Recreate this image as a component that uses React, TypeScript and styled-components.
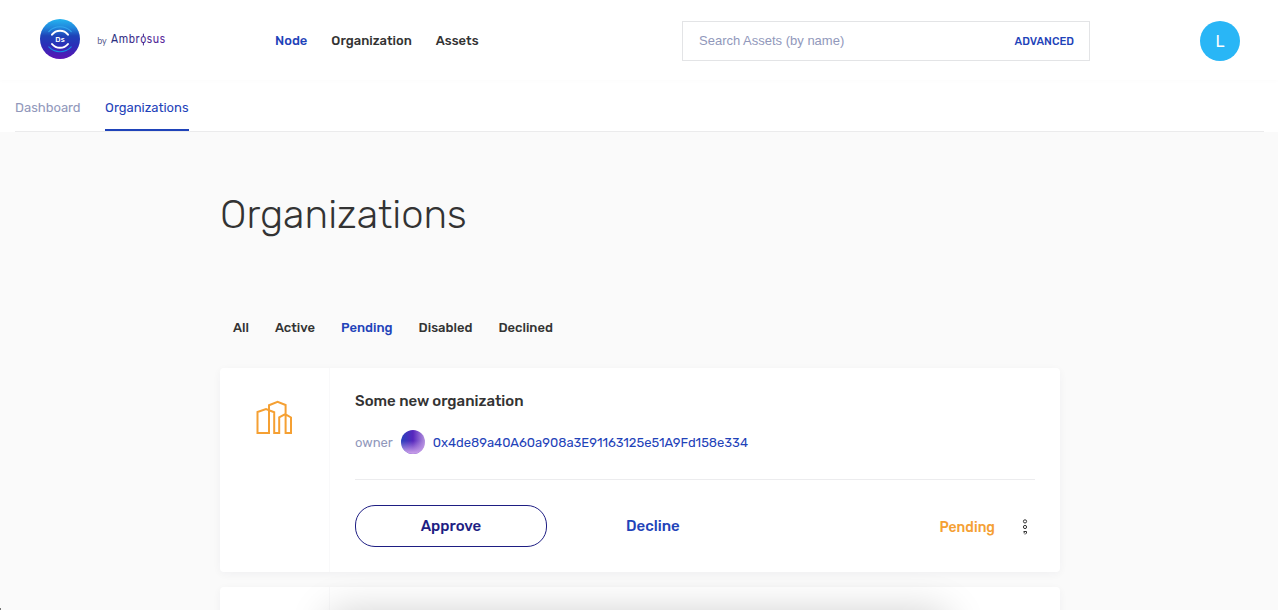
import React from 'react';
import styled, { createGlobalStyle } from 'styled-components';

const GlobalStyle = createGlobalStyle`
  * { box-sizing: border-box; }
  body {
    margin: 0;
    background: #fafafa;
    color: #333333;
    font-family: Rubik, Roboto, sans-serif;
    font-size: 13px;
  }
  button { font-family: inherit; cursor: pointer; }
`;

const Page = styled.div`
  position: relative;
  height: 610px;
  overflow: hidden;
`;

const Header = styled.header`
  position: relative;
  display: flex;
  align-items: center;
  height: 80px;
  padding: 2px 38px 0 40px;
  background: #fff;
  box-shadow: 0 0 6px rgba(0, 0, 0, 0.022);
`;

const Brand = styled.a`
  display: flex;
  align-items: center;
  width: 235px;
  height: 40px;
  margin-top: -4px;
`;

const Nav = styled.nav`
  display: flex;
  gap: 24px;
  width: 407px;
`;

const NavLink = styled.a<{ $active?: boolean }>`
  color: ${({ $active }) => ($active ? '#1f43b9' : '#333333')};
  font-weight: 500;
  line-height: 16px;
  white-space: nowrap;
`;

const Search = styled.div`
  display: flex;
  align-items: center;
  justify-content: space-between;
  width: 408px;
  height: 40px;
  padding: 0 15px 0 16px;
  border: 1px solid #e3e4e6;
`;

const SearchInput = styled.input`
  width: 240px;
  padding: 0 0 2px;
  border: 0;
  outline: 0;
  background: none;
  color: #333;
  font: 13px 'Liberation Sans', sans-serif;
  &::placeholder { color: #9198bb; opacity: 1; }
`;

const Advanced = styled.button`
  padding: 0;
  border: 0;
  background: none;
  color: #1f43b9;
  font-size: 11px;
  font-weight: 500;
`;

const Avatar = styled.div`
  display: flex;
  align-items: center;
  justify-content: center;
  width: 40px;
  height: 40px;
  margin-left: auto;
  border-radius: 50%;
  background: #29b6f6;
  color: #fff;
  font-size: 16px;
  font-weight: 400;
`;

const TabBar = styled.div`
  height: 52px;
  padding: 0 14px 0 15px;
  background: #fff;
`;

const Tabs = styled.div`
  display: flex;
  gap: 24.5px;
  height: 52px;
  border-bottom: 1px solid #ebebec;
`;

const Tab = styled.a<{ $active?: boolean }>`
  height: 51px;
  padding-top: 20px;
  line-height: 16px;
  color: ${({ $active }) => ($active ? '#1f43b9' : '#9198bb')};
  border-bottom: 2px solid ${({ $active }) => ($active ? '#1f43b9' : 'transparent')};
`;

const Content = styled.main`
  width: 840px;
  margin-left: 220px;
  padding-top: 58px;
`;

const Title = styled.h1`
  margin: 0;
  height: 50px;
  line-height: 50px;
  font-size: 40px;
  font-weight: 300;
`;

const Filters = styled.div`
  display: flex;
  gap: 26px;
  padding: 80px 13px 32px;
`;

const Card = styled.article`
  display: flex;
  height: 204px;
  margin-bottom: 15px;
  border-radius: 4px;
  background: #fff;
  box-shadow: 0 2px 8px rgba(30, 30, 80, 0.045);
`;

const IconCell = styled.div`
  width: 110px;
  padding: 32px 0 0 36px;
  border-right: 1px solid #f9f9fa;
`;

const Details = styled.div`
  flex: 1;
  padding: 24px 25px 0;
`;

const Name = styled.h2`
  margin: 0;
  font-size: 15px;
  font-weight: 500;
  line-height: 18px;
`;

const Owner = styled.div`
  display: flex;
  align-items: center;
  gap: 8px;
  height: 24px;
  margin-top: 20px;
  color: #9198bb;
`;

const Address = styled.a`
  color: #1f43b9;
  letter-spacing: -0.025px;
`;

const Actions = styled.div`
  display: flex;
  align-items: center;
  margin-top: 25px;
  padding-top: 25px;
  border-top: 1px solid #ececee;
`;

const Approve = styled.button`
  width: 192px;
  height: 42px;
  padding: 0;
  border: 1px solid #1e1e83;
  border-radius: 20px;
  background: #fff;
  color: #1e1e83;
  font-size: 15px;
  font-weight: 500;
`;

const Decline = styled.button`
  margin-left: 79px;
  padding: 0;
  border: 0;
  background: none;
  color: #1f43b9;
  font-size: 15px;
  font-weight: 500;
`;

const Status = styled.span`
  margin: 2px 24px 0 auto;
  color: #f5a033;
  font-size: 14px;
  font-weight: 500;
`;

const MoreButton = styled.button`
  width: 12px;
  height: 18px;
  margin: 2px 4px 0 0;
  padding: 0;
  border: 0;
  background: none;
  line-height: 0;
`;

const BottomShade = styled.div`
  position: absolute;
  left: 334px;
  top: 617px;
  width: 608px;
  height: 60px;
  box-shadow: 0 0 42px 4px rgba(0, 0, 0, 0.2);
`;

const Corner = styled.div`
  position: absolute;
  left: 0;
  bottom: 0;
  width: 1px;
  height: 2px;
  background: #777;
`;

const Logo = () => (
  <svg width="130" height="40" viewBox="0 0 130 40">
    <defs>
      <linearGradient id="disc" x1="0" y1="0" x2="0" y2="1">
        <stop offset="0" stopColor="#24b3ef" />
        <stop offset="0.22" stopColor="#2186dc" />
        <stop offset="0.42" stopColor="#1e43b8" />
        <stop offset="0.65" stopColor="#2a2fb8" />
        <stop offset="1" stopColor="#5c14b4" />
      </linearGradient>
      <linearGradient id="wordmark" x1="0" y1="0" x2="1" y2="0">
        <stop offset="0" stopColor="#282f7d" />
        <stop offset="1" stopColor="#58219a" />
      </linearGradient>
    </defs>
    <circle cx="20" cy="20" r="20" fill="url(#disc)" />
    <g fill="none" strokeLinecap="round">
      <path d="M12 15.6A10.2 10.2 0 0 1 28 15.6M12 25A10.2 10.2 0 0 0 28 25" stroke="#fff" strokeWidth="2" />
      <path d="M8.8 12.6A15.4 15.4 0 0 1 31.2 12.6" stroke="#31a6ed" strokeWidth="1.1" />
      <path d="M8.8 27.9A15.4 15.4 0 0 0 31.2 27.9" stroke="#178ee5" strokeWidth="1.1" />
    </g>
    <text x="20" y="22.9" textAnchor="middle" fill="#fff" fontFamily="Rubik, sans-serif" fontWeight="500" fontSize="7.5">Ds</text>
    <text x="57.2" y="24.5" fill="#5a5d8f" fontFamily="Lato, sans-serif" fontSize="9">by</text>
    <g transform="translate(71 24) scale(0.78 1)">
      <text fill="url(#wordmark)" fontFamily="Rubik, sans-serif" fontWeight="400" fontSize="13.5" textLength="69.5">Ambrosus</text>
    </g>
    <path d="M103.4 14.7v2.5M103.4 23.8v2.6" stroke="#48268f" strokeWidth="1" />
  </svg>
);

const Buildings = () => (
  <svg width="37" height="35" viewBox="0 0 37 35" fill="none" stroke="#f5a033" strokeWidth="2">
    <path d="M13 33H1.5V12L10 9L18.2 12.3V33H23.2V17.3L29.2 14.2L35 17.5V33H29.6V5L21.6 1.9L13 5.2V33Z" />
  </svg>
);

const Identicon = () => (
  <svg width="24" height="24" viewBox="0 0 24 24">
    <defs>
      <linearGradient id="ident" x1="0" y1="0" x2="1" y2="0">
        <stop offset="0" stopColor="#2942bd" />
        <stop offset="0.5" stopColor="#5727bd" />
        <stop offset="1" stopColor="#b492de" />
      </linearGradient>
      <linearGradient id="identFade" x1="0" y1="0" x2="0" y2="1">
        <stop offset="0.45" stopColor="#c59be7" stopOpacity="0" />
        <stop offset="0.95" stopColor="#c59be7" />
      </linearGradient>
    </defs>
    <circle cx="12" cy="12" r="12" fill="url(#ident)" />
    <circle cx="12" cy="12" r="12" fill="url(#identFade)" />
  </svg>
);

const MoreIcon = () => (
  <svg width="12" height="18" viewBox="0 0 12 18" fill="none" stroke="#333" strokeWidth="1">
    <circle cx="6" cy="3.4" r="1.6" />
    <circle cx="6" cy="9" r="1.6" />
    <path d="M4.5 13.5H7.5V15L6 16.5M4.5 14.8H6" />
  </svg>
);

export default function App() {
  return (
    <Page>
      <GlobalStyle />
      <Header>
        <Brand><Logo /></Brand>
        <Nav>
          <NavLink $active>Node</NavLink>
          <NavLink>Organization</NavLink>
          <NavLink>Assets</NavLink>
        </Nav>
        <Search>
          <SearchInput placeholder="Search Assets (by name)" />
          <Advanced>ADVANCED</Advanced>
        </Search>
        <Avatar>L</Avatar>
      </Header>
      <TabBar>
        <Tabs>
          <Tab>Dashboard</Tab>
          <Tab $active>Organizations</Tab>
        </Tabs>
      </TabBar>
      <Content>
        <Title>Organizations</Title>
        <Filters>
          <NavLink>All</NavLink>
          <NavLink>Active</NavLink>
          <NavLink $active>Pending</NavLink>
          <NavLink>Disabled</NavLink>
          <NavLink>Declined</NavLink>
        </Filters>
        <Card>
          <IconCell><Buildings /></IconCell>
          <Details>
            <Name>Some new organization</Name>
            <Owner>
              <span>owner</span>
              <Identicon />
              <Address>0x4de89a40A60a908a3E91163125e51A9Fd158e334</Address>
            </Owner>
            <Actions>
              <Approve>Approve</Approve>
              <Decline>Decline</Decline>
              <Status>Pending</Status>
              <MoreButton aria-label="More"><MoreIcon /></MoreButton>
            </Actions>
          </Details>
        </Card>
        <Card>
          <IconCell />
          <Details />
        </Card>
      </Content>
      <BottomShade />
      <Corner />
    </Page>
  );
}
